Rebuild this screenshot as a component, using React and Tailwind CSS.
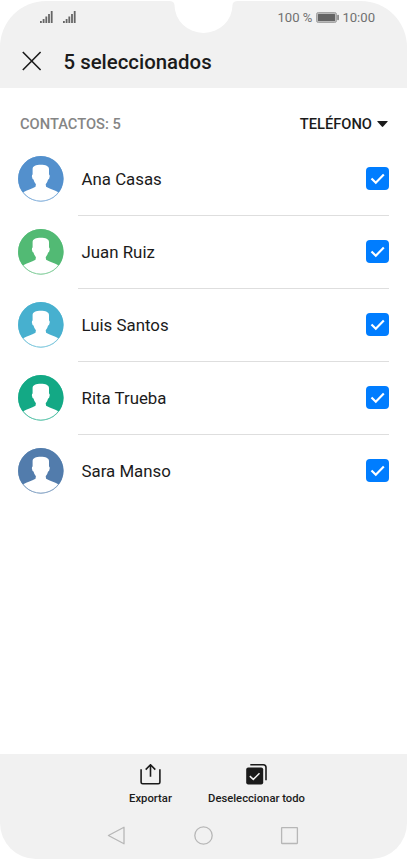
const contacts = [
  { name: "Ana Casas", color: "text-[#5390cd]" },
  { name: "Juan Ruiz", color: "text-[#52ba74]" },
  { name: "Luis Santos", color: "text-[#47b0cf]" },
  { name: "Rita Trueba", color: "text-[#13a985]" },
  { name: "Sara Manso", color: "text-[#527cac]" },
];

function App() {
  return (
    <div className="w-[407px] h-[860px] bg-white pt-px pb-px font-['Roboto',sans-serif] text-[#1b1b1b] overflow-hidden">
      <div className="relative h-full flex flex-col bg-white rounded-t-[46px] rounded-b-[36px] overflow-hidden">
        <Notch />

        <header className="h-[87px] bg-[#f1f1f1] shrink-0">
          <StatusBar />
          <div className="flex items-center h-[56px] pl-[22px]">
            <svg className="w-5 h-5" viewBox="0 0 20 20" fill="none" stroke="currentColor" strokeWidth="1.6">
              <path d="M.8 1l17.8 18M18.6 1L.8 19" />
            </svg>
            <h1 className="ml-[21.5px] mt-[2px] text-[20.4px] leading-6 font-medium">5 seleccionados</h1>
          </div>
        </header>

        <main className="flex-1">
          <div className="flex items-center justify-between h-[55px] pt-[18px] pb-[1px] pl-[20px] pr-[19px] font-medium text-[14.7px]">
            <span className="text-[#858585]">CONTACTOS: 5</span>
            <button className="flex items-center gap-[5px]">
              TELÉFONO
              <svg className="w-[11px] h-[6px]" viewBox="0 0 11 6" fill="currentColor">
                <path d="M.8 0h9.4q1 0 .3.8L6.2 5.6q-.7.7-1.4 0L.5.8Q-.2 0 .8 0z" />
              </svg>
            </button>
          </div>
          <ul>
            {contacts.map((contact, i) => (
              <ContactRow key={contact.name} {...contact} last={i === contacts.length - 1} />
            ))}
          </ul>
        </main>

        <footer className="h-[105px] bg-[#f1f1f1] shrink-0">
          <div className="flex pt-[10px] pl-[97px] h-[62px] text-[11.25px] font-medium leading-4">
            <Action label="Exportar" width="w-[107px]">
              <path d="M1.1 5.2v13q0 1.6 1.6 1.6h15.6q1.6 0 1.6-1.6v-13M10.5 12.8V1.2M5.7 5.6l4.8-4.8 4.8 4.8" />
            </Action>
            <Action label="Deseleccionar todo" width="w-[105px]">
              <path d="M4.3.8h13q2.7 0 2.7 2.7v12.7" />
              <rect x=".2" y="3.5" width="17" height="17" rx="2" fill="currentColor" stroke="none" />
              <path d="M3.8 12.1l3.5 3.3 6.2-6.1" stroke="#f1f1f1" strokeWidth="1.5" />
            </Action>
          </div>
          <nav className="flex items-center justify-between pl-[107px] pr-[108px] h-[38px] text-[#b7b7b7]">
            <NavIcon>
              <path d="M17 1.2v16.6L1.4 9.5z" />
            </NavIcon>
            <NavIcon>
              <circle cx="9.5" cy="9.5" r="8.7" />
            </NavIcon>
            <NavIcon>
              <rect x="1.6" y="1.7" width="15.8" height="15.8" rx=".4" />
            </NavIcon>
          </nav>
        </footer>
      </div>
    </div>
  );
}

function Notch() {
  return (
    <svg className="absolute top-0 left-[169px] w-[69px] h-[33px]" viewBox="0 0 69 33" fill="#fff">
      <path d="M0 0Q5.3 0 5.5 4A29 28 0 0 0 63.5 4Q63.7 0 69 0z" />
    </svg>
  );
}

function StatusBar() {
  return (
    <div className="flex items-center justify-between h-[32px] pl-[40px] pr-[32px] text-[#707070] text-[13.1px]">
      <div className="flex gap-[10px]">
        <Signal />
        <Signal />
      </div>
      <div className="flex items-center">
        <span className="mt-px">100 %</span>
        <svg className="w-[23px] h-[11px] mt-px ml-[4px] mr-[3px]" viewBox="0 0 23 11">
          <rect x=".5" y=".5" width="20" height="10" rx="1.8" fill="#b9b9b9" stroke="#a5a5a5" />
          <rect x="2" y="2" width="17" height="7" rx=".5" fill="#646464" />
          <rect x="21.3" y="2.8" width="1.5" height="5.4" rx=".7" fill="#777" />
        </svg>
        <span className="mt-px">10:00</span>
      </div>
    </div>
  );
}

function Signal() {
  return (
    <svg className="w-[13px] h-[12px]" viewBox="0 0 13 12" fill="#666">
      <rect x="0" y="10" width="1.8" height="2" />
      <rect x="2.7" y="8" width="1.8" height="4" />
      <rect x="5.4" y="5.5" width="1.8" height="6.5" />
      <rect x="8.1" y="3" width="1.8" height="9" />
      <rect x="10.8" y="0" width="1.8" height="12" />
    </svg>
  );
}

function ContactRow({ name, color, last }) {
  return (
    <li className="h-[73px] flex items-center pl-[18px] pr-[18px]">
      <Avatar color={color} />
      <div className={`ml-[14px] pl-[3.5px] h-full flex-1 flex items-center justify-between border-b ${last ? "border-transparent" : "border-[#dedede]"}`}>
        <span className="mt-[2px] text-[16.85px]">{name}</span>
        <Checkbox />
      </div>
    </li>
  );
}

function Avatar({ color }) {
  return (
    <svg className={`w-[46px] h-[46px] mb-[2px] shrink-0 ${color}`} viewBox="0 0 46 46">
      <circle cx="22.8" cy="22.8" r="22.7" fill="currentColor" />
      <path
        fill="#fff"
        d="M4.8 36.6C9.5 33.8 13.5 32.9 17.5 30.8L17.9 28.2Q16 25.8 15.5 23.4Q14.2 23 13.9 20.4Q13.8 18.8 14.6 18.4V13C14.6 10.2 18 8.8 22.8 8.8S31 10.2 31 13V18.4Q31.8 18.8 31.7 20.4Q31.4 23 30.1 23.4Q29.6 25.8 27.7 28.2L28.1 30.8C32.1 32.9 36.1 33.8 40.8 36.6A22.5 22.5 0 0 1 4.8 36.6z"
      />
      <circle cx="22.8" cy="22.8" r="22.3" fill="none" stroke="currentColor" strokeWidth=".7" />
    </svg>
  );
}

function Checkbox() {
  return (
    <svg className="w-[23px] h-[23px] mb-px" viewBox="0 0 23 23" fill="none">
      <rect width="23" height="23" rx="4" fill="#007dff" />
      <path d="M5.5 11.5l4.3 4.2 8-8.1" stroke="#fff" strokeWidth="2.2" />
    </svg>
  );
}

function Action({ label, width, children }) {
  return (
    <button className={`${width} flex flex-col items-center`}>
      <svg className="w-[21px] h-[21px]" viewBox="0 0 21 21" fill="none" stroke="currentColor" strokeWidth="1.6">
        {children}
      </svg>
      <span className="mt-[6px] whitespace-nowrap">{label}</span>
    </button>
  );
}

function NavIcon({ children }) {
  return (
    <svg className="w-[19px] h-[19px]" viewBox="0 0 19 19" fill="none" stroke="currentColor" strokeWidth="1.3" strokeLinejoin="round">
      {children}
    </svg>
  );
}

export default App;
